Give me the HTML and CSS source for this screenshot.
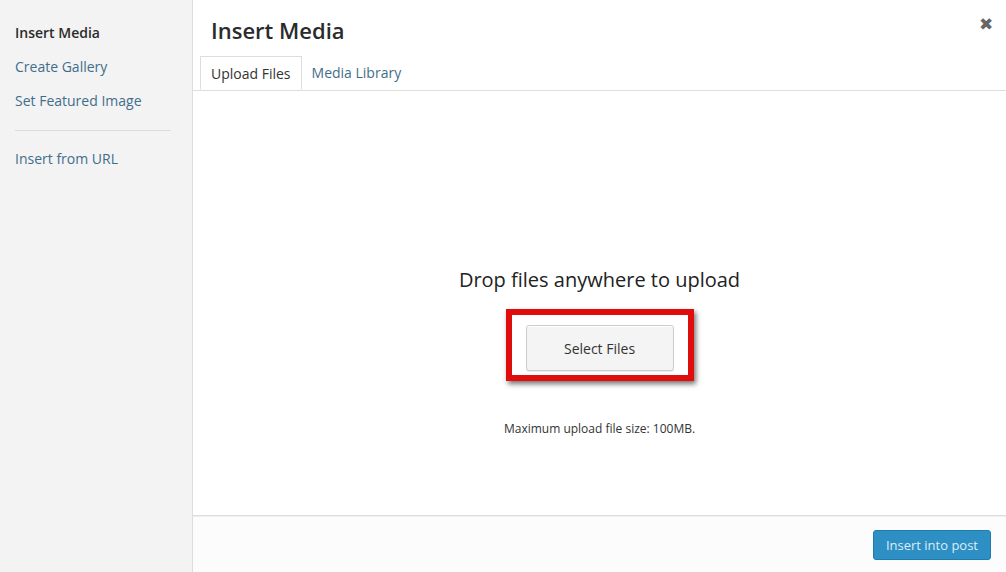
FILE: index.html
```html
<!DOCTYPE html>
<html>
<head>
<meta charset="utf-8">
<title>Insert Media</title>
<link rel="stylesheet" href="styles.css">
</head>
<body>

<div class="frame">

	<div class="menu">
		<a class="menu-item active">Insert Media</a>
		<a class="menu-item">Create Gallery</a>
		<a class="menu-item">Set Featured Image</a>
		<div class="separator"></div>
		<a class="menu-item">Insert from URL</a>
	</div>

	<div class="main">
		<div class="title">
			<h1>Insert Media</h1>
			<span class="close">&#x2716;</span>
		</div>

		<div class="tabs">
			<a class="tab active">Upload Files</a>
			<a class="tab">Media Library</a>
		</div>

		<div class="content">
			<div class="uploader">
				<h2>Drop files anywhere to upload</h2>
				<div class="highlight">
					<button class="select-btn">Select Files</button>
				</div>
				<p class="max-size">Maximum upload file size: 100MB.</p>
			</div>
		</div>

		<div class="toolbar">
			<button class="insert-btn">Insert into post</button>
		</div>
	</div>

</div>

</body>
</html>
```

FILE: styles.css
```css
html, body {
	margin : 0;
	height : 100%;
}

body {
	font-family : "Open Sans", "Liberation Sans", sans-serif;
	color : #333;
	background-color : #fff;
}

.frame {
	display : flex;
	height : 572px;
}

.menu {
	width : 193px;
	flex-shrink : 0;
	background-color : #f3f3f3;
	border-right : 1px solid #ddd;
	padding-top : 23px;
	box-sizing : border-box;
	display : flex;
	flex-direction : column;
}

.menu-item {
	font-size : 14px;
	line-height : 20px;
	padding : 0 15px;
	margin-bottom : 14px;
	color : #3f6e8b;
}

.menu-item.active {
	color : #2b2b2b;
	font-weight : 600;
}

.separator {
	height : 1px;
	background-color : #dcdcdc;
	margin : 5px 21px 18px 15px;
}

.main {
	flex : 1;
	display : flex;
	flex-direction : column;
}

.title {
	display : flex;
	justify-content : space-between;
	align-items : flex-start;
	padding : 0 13px 0 18px;
	height : 56px;
}

.title h1 {
	margin : 14px 0 0 0;
	font-size : 22px;
	line-height : 32px;
	font-weight : 600;
	color : #2b2b2b;
}

.close {
	margin-top : 12px;
	font-size : 17px;
	color : #666;
}

.tabs {
	display : flex;
	padding-left : 7px;
	border-bottom : 1px solid #ddd;
	height : 34px;
}

.tab {
	font-size : 14px;
	line-height : 33px;
	padding : 0 10px;
	color : #3f6e8b;
}

.tab.active {
	color : #333;
	background-color : #fff;
	border : 1px solid #ddd;
	border-bottom : 1px solid #fff;
	height : 34px;
	box-sizing : border-box;
}

.content {
	flex : 1;
	display : flex;
	justify-content : center;
	padding-top : 175px;
	box-sizing : border-box;
}

.uploader {
	display : flex;
	flex-direction : column;
	align-items : center;
}

.uploader h2 {
	margin : 0;
	font-size : 20px;
	line-height : 28px;
	font-weight : 400;
	color : #222;
}

.highlight {
	margin-top : 15px;
	padding : 10px 14px 4px 14px;
	border : 6px solid #e00d0d;
	box-shadow : 2px 3px 5px rgba(0,0,0,0.55);
}

.select-btn {
	display : block;
	width : 148px;
	height : 46px;
	font-family : inherit;
	font-size : 14px;
	color : #333;
	background-color : #f4f4f4;
	border : 1px solid #ccc;
	border-radius : 3px;
	box-shadow : 0 1px 0 #fff inset, 0 1px 0 rgba(0,0,0,0.08);
}

.max-size {
	margin : 39px 0 0 0;
	font-size : 12px;
	color : #333;
}

.toolbar {
	height : 56px;
	border-top : 1px solid #ddd;
	background-color : #fcfcfc;
	display : flex;
	justify-content : flex-end;
	align-items : center;
	padding-right : 15px;
	box-shadow : 0 1px 0 #f0f0f0 inset;
}

.insert-btn {
	font-family : inherit;
	font-size : 13px;
	color : #d8eef8;
	height : 30px;
	padding : 0 12px;
	background-color : #2e8fc4;
	border : 1px solid #1f7cae;
	border-radius : 3px;
	margin-top : 2px;
}
```
